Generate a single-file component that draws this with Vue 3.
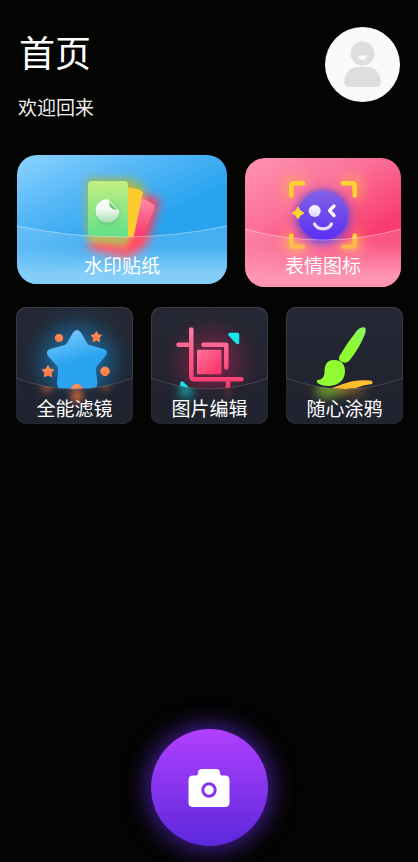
<script setup>
const wide = [
  { id: 'sticker', label: '水印贴纸', w: 210, h: 129 },
  { id: 'emoji', label: '表情图标', w: 156, h: 129 },
]
const small = [
  { id: 'filter', label: '全能滤镜', w: 117, h: 117 },
  { id: 'crop', label: '图片编辑', w: 117, h: 117 },
  { id: 'doodle', label: '随心涂鸦', w: 117, h: 117 },
]
const rows = [
  { name: 'wide', cards: wide },
  { name: 'small', cards: small },
]

const edge = (c) => `M0 71Q${c.w / 2} 93 ${c.w} 71`
const above = (c) => `${edge(c)}V0H0Z`
const below = (c) => `${edge(c)}V${c.h}H0Z`
</script>

<template>
  <main class="home">
    <header class="top">
      <div class="greeting">
        <h1>首页</h1>
        <p>欢迎回来</p>
      </div>
      <button class="avatar" type="button" aria-label="个人中心">
        <svg viewBox="0 0 75 75" aria-hidden="true">
          <circle cx="37.500" cy="26.500" r="12" fill="#dedede" />
          <path d="M33 28.500H42Q41.500 33 37.500 33T33 28.500Z" fill="#fafafa" />
          <path d="M31 40H44Q52 41 55 50Q58 60 50 60H25Q17 60 20 50Q23 41 31 40Z" fill="#dedede" />
        </svg>
      </button>
    </header>

    <nav class="tools" aria-label="工具">
      <div v-for="row in rows" :key="row.name" class="row" :class="row.name">
        <button v-for="c in row.cards" :key="c.id" type="button" class="card" :class="c.id">
          <svg class="art" :viewBox="`0 0 ${c.w} ${c.h}`" preserveAspectRatio="xMidYMid slice" aria-hidden="true">
            <defs>
              <clipPath :id="c.id + '-above'"><path :d="above(c)" /></clipPath>
              <clipPath :id="c.id + '-below'"><path :d="below(c)" /></clipPath>
              <filter :id="c.id + '-soft'" x="-60%" y="-60%" width="220%" height="220%"><feGaussianBlur stdDeviation="3" /></filter>
              <filter :id="c.id + '-glow'" x="-60%" y="-60%" width="220%" height="220%"><feGaussianBlur stdDeviation="5" /></filter>
              <filter :id="c.id + '-wide'" x="-80%" y="-80%" width="260%" height="260%"><feGaussianBlur stdDeviation="12" /></filter>
              <linearGradient id="green" x1="0" y1="0" x2="0" y2="1"><stop stop-color="#c2ee82" /><stop offset="1" stop-color="#58df8b" /></linearGradient>
              <linearGradient id="peel" x1="0" y1="0" x2="0" y2="1"><stop stop-color="#fff" /><stop offset=".4" stop-color="#f4fbf3" /><stop offset="1" stop-color="#a5dfb3" /></linearGradient>
              <linearGradient id="rose" x1="0" y1="0" x2="0" y2="1"><stop stop-color="#ff86a8" /><stop offset=".7" stop-color="#f93a70" /></linearGradient>
              <linearGradient id="square" x1="0" y1="0" x2="1" y2="1"><stop stop-color="#ff749b" /><stop offset=".8" stop-color="#fa3b70" /></linearGradient>
              <linearGradient id="violet" x1="0" y1="0" x2="0" y2="1"><stop stop-color="#8362e6" /><stop offset="1" stop-color="#5a2ff4" /></linearGradient>
              <linearGradient id="smile" x1="0" y1="0" x2="0" y2="1"><stop stop-color="#fff" /><stop offset="1" stop-color="#dcd2ff" /></linearGradient>
              <linearGradient id="sky" x1=".3" y1="0" x2=".6" y2="1"><stop stop-color="#7bc9ff" /><stop offset=".55" stop-color="#2aa3f0" /></linearGradient>
              <linearGradient id="orange" x1="0" y1="0" x2="0" y2="1"><stop stop-color="#ff9862" /><stop offset="1" stop-color="#ff7037" /></linearGradient>
              <linearGradient id="tool" gradientUnits="userSpaceOnUse" x1="0" y1="20" x2="0" y2="78"><stop stop-color="#ff7da3" /><stop offset="1" stop-color="#fa3b70" /></linearGradient>
              <linearGradient id="lime" x1="1" y1="0" x2="0" y2="1"><stop stop-color="#8bf56b" /><stop offset=".5" stop-color="#8cfb33" /></linearGradient>

              <g :id="c.id + '-icon'">
                <template v-if="c.id === 'sticker'">
                  <path d="M126 45L135.500 50.500Q137 52 136 54L118 95L100 88Z" fill="url(#rose)" stroke="url(#rose)" stroke-width="3" stroke-linejoin="round" />
                  <path d="M108 33L122 36Q125 37 124 40L112 97L90 92Z" fill="#fccb2d" stroke="#fccb2d" stroke-width="3" stroke-linejoin="round" />
                  <rect x="71" y="26" width="40" height="61" rx="4" fill="url(#green)" />
                </template>
                <template v-else-if="c.id === 'emoji'">
                  <circle cx="78" cy="57.300" r="25" fill="url(#violet)" />
                  <path d="M46.300 37.500V28Q46.300 25.300 49 25.300H58M98 25.300H107Q109.700 25.300 109.700 28V37.500M109.700 77.500V86Q109.700 88.700 107 88.700H98M58 88.700H49Q46.300 88.700 46.300 86V77.500" fill="none" stroke="#ffd42e" stroke-width="4.500" stroke-linecap="round" stroke-linejoin="round" />
                  <path d="M53 49Q54.500 53.500 59 55Q54.500 56.500 53 61Q51.500 56.500 47 55Q51.500 53.500 53 49Z" fill="#ffd42e" stroke="#ffd42e" stroke-width="1" stroke-linejoin="round" />
                  <circle cx="69.700" cy="53" r="6" fill="url(#smile)" />
                  <path d="M89 48L84.500 52.700L89 57.500" fill="none" stroke="#fff" stroke-width="3.300" stroke-linecap="round" stroke-linejoin="round" />
                  <path d="M69.500 66Q72 70.800 78 70.800T86.500 66" fill="none" stroke="#e5dcff" stroke-width="3.300" stroke-linecap="round" />
                </template>
                <template v-else-if="c.id === 'filter'">
                  <path d="M57 25.500Q61 20.500 65 25.500L71 36Q72 38 75 38.500L88 42Q93 44 90 48.500L81 59Q79.500 61 80 64L81.500 76Q81 82 76 81.500H46Q41 82 41 76L42 64Q42.500 61 41 59L32 49Q29 44 34 42L47 38.500Q50 38 51 36Z" fill="url(#sky)" />
                  <g fill="url(#orange)" stroke="#ff8650" stroke-width="1" stroke-linejoin="round">
                    <circle cx="43" cy="31" r="3.700" />
                    <circle cx="89" cy="64.300" r="4.300" />
                    <circle cx="60.700" cy="82.700" r="5.500" />
                    <path d="M80.300 24.500L82 27.700L85.500 28.300L83 31L83.600 34.700L80.300 33L77 34.700L77.600 31L75 28.300L78.600 27.700Z" />
                    <path d="M32 58.500L33.900 62L37.800 62.700L35.100 65.700L35.700 69.700L32 68L28.300 69.700L28.900 65.700L26.200 62.700L30.100 62Z" />
                  </g>
                </template>
                <template v-else-if="c.id === 'crop'">
                  <path d="M40.300 22.500V69Q40.300 72.300 43.500 72.300H90.500M27.500 37.700H37.500M52.500 37.700H75.300V60.500M77 74V89" fill="none" stroke="url(#tool)" stroke-width="4.500" stroke-linecap="round" stroke-linejoin="round" />
                  <rect x="46" y="42.700" width="24.500" height="24.500" rx="1" fill="url(#square)" />
                  <path d="M79 27.500H86.500V35.500Z" fill="#13e6ed" stroke="#13e6ed" stroke-width="3.500" stroke-linejoin="round" />
                  <path d="M31 76V84H39Z" fill="#13e6ed" stroke="#13e6ed" stroke-width="3.500" stroke-linejoin="round" />
                </template>
                <template v-else>
                  <path d="M46 81Q56 77 65 74.500Q76 72.500 85 73.500Q87.500 75 86 77Q77 78 70 81Q64 84 58 87Q49 85 46 81Z" fill="#ffbd2d" />
                  <path d="M53.500 49Q61 36 71 23.500Q75 19 79 20.500Q80.500 23 79 27Q73 42 63 54Q60 57 56 55Q51.500 53 53.500 49Z" fill="url(#lime)" />
                  <path d="M31.500 73Q38 72.500 38.500 66Q38 53 48 53Q59 53 59 65Q58 77 44 79Q36 79.500 31.500 76Q30 74 31.500 73Z" fill="#91fc34" />
                </template>
              </g>
            </defs>

            <g v-if="c.id === 'sticker'" filter="url(#sticker-glow)">
              <path d="M112 33L143 45L130 90L111 106L69 94Z" fill="#ff3d5c" />
              <path d="M70 24H113L128 31L112 80H70Z" fill="#a6b84a" />
            </g>
            <g v-else-if="c.id === 'emoji'" filter="url(#emoji-glow)">
              <path d="M42 42V22H62M94 22H114V42M114 73V92H94M62 92H42V73" fill="none" stroke="#ffbf3f" stroke-width="7" opacity=".5" />
              <circle cx="78" cy="59" r="27" fill="#6546d8" />
            </g>
            <circle v-else-if="c.id === 'filter'" cx="61" cy="55" r="36" fill="#187dbb" opacity=".75" filter="url(#filter-wide)" />
            <circle v-else-if="c.id === 'crop'" cx="60" cy="56" r="30" fill="#a82352" opacity=".6" filter="url(#crop-wide)" />

            <g :clip-path="`url(#${c.id}-above)`"><use :href="`#${c.id}-icon`" /></g>
            <path :d="below(c)" class="glass-base" />
            <g :clip-path="`url(#${c.id}-below)`">
              <g v-if="c.id === 'sticker'" filter="url(#sticker-soft)" opacity=".85">
                <path d="M112 78H132L120 94L109 102L74 88Z" fill="#ff4a5e" />
                <path d="M71 76H116L108 91L71 87Z" fill="#a9c35c" />
              </g>
              <use v-else :href="`#${c.id}-icon`" :filter="`url(#${c.id}-soft)`" class="reflection" />
              <use v-if="c.id === 'emoji'" href="#emoji-icon" opacity=".6" />
              <g v-if="c.id === 'filter'" filter="url(#filter-soft)" fill="#ff7840">
                <circle cx="61" cy="90" r="6" opacity=".7" />
                <circle cx="31" cy="80" r="6" opacity=".45" />
                <circle cx="89" cy="79" r="5" opacity=".4" />
              </g>
              <circle v-else-if="c.id === 'crop'" cx="35" cy="85" r="8" fill="#13c9cf" opacity=".5" filter="url(#crop-glow)" />
              <g v-else-if="c.id === 'doodle'" filter="url(#doodle-glow)">
                <ellipse cx="42" cy="83" rx="13" ry="9" fill="#8fcf2d" opacity=".6" />
                <ellipse cx="66" cy="84" rx="15" ry="6" fill="#b98c2a" opacity=".35" />
              </g>
            </g>
            <g v-if="c.id === 'sticker'">
              <circle cx="91" cy="59" r="10" fill="#35975d" opacity=".45" filter="url(#sticker-soft)" />
              <path d="M91 44.200A11.800 11.800 0 1 0 102.200 55.500Z" fill="url(#peel)" />
              <path d="M92 46.500L100.500 55Q91.500 55 92 46.500Z" fill="#6ccb6c" />
            </g>
            <path :d="edge(c)" class="rim" />
          </svg>
          <span class="shade"></span>
          <span class="label">{{ c.label }}</span>
        </button>
      </div>
    </nav>

    <button class="shutter" type="button" aria-label="拍照">
      <svg viewBox="0 0 42 38" aria-hidden="true">
        <path d="M5 6.500H8Q10 6.500 10 4Q10 0 14 0H28Q32 0 32 4Q32 6.500 34 6.500H37Q41.500 6.500 41.500 11V33.500Q41.500 38 37 38H5Q.5 38 .5 33.500V11Q.5 6.500 5 6.500Z" fill="#fff" />
        <circle cx="21" cy="21" r="6.200" fill="#fff" stroke="#8435ed" stroke-width="3" />
      </svg>
    </button>
  </main>
</template>

<style>
body {
  margin: 0;
  background: #040402;
}
</style>

<style scoped>
.home {
  box-sizing: border-box;
  min-height: 100vh;
  padding: 27px 0 16px;
  display: flex;
  flex-direction: column;
  background: #040402;
  color: #fff;
  font-family: "Noto Sans CJK SC", sans-serif;
}
button {
  margin: 0;
  padding: 0;
  border: 0;
  color: inherit;
  font: inherit;
  cursor: pointer;
}
.top {
  display: flex;
  justify-content: space-between;
  align-items: flex-start;
  padding: 0 18px;
}
h1 {
  margin: 0;
  padding-left: 1px;
  font-size: 36px;
  line-height: 48px;
  font-weight: 400;
}
p {
  margin: 20px 0 0;
  font-size: 18px;
  line-height: 24px;
  color: #eee;
}
.avatar {
  width: 75px;
  height: 75px;
  border-radius: 50%;
  background: #fafafa;
}
.avatar svg {
  display: block;
}
.tools {
  display: flex;
  flex-direction: column;
  gap: 20px;
  margin-top: 36px;
}
.row {
  display: grid;
  gap: 18px;
}
.wide {
  grid-template-columns: 210fr 156fr;
  padding: 0 17px;
}
.small {
  grid-template-columns: repeat(3, 1fr);
  padding: 0 15px 0 16px;
}
.card {
  display: grid;
  align-items: end;
  overflow: hidden;
  height: 129px;
  border-radius: 20px;
}
.card > * {
  grid-area: 1 / 1;
}
.small .card {
  height: 117px;
  border-radius: 10px;
  background: linear-gradient(#262935, #1f222d);
  box-shadow: inset 0 0 0 1px #393b45;
}
.art {
  display: block;
  width: 100%;
  height: 100%;
  min-width: 0;
}
.sticker {
  background: linear-gradient(155deg, #8cd3ff 0%, #57b8f7 28%, #27a3ef 58%, #27a3ef 100%);
}
.emoji {
  margin-top: 3px;
  background: linear-gradient(150deg, #ff94b4 0%, #fb7098 35%, #f83b70 68%);
}
.glass-base {
  fill: rgba(255, 255, 255, 0.14);
}
.small .glass-base {
  fill: #222530;
  fill-opacity: 0.85;
}
.reflection {
  opacity: 0.7;
}
.small .reflection {
  opacity: 0.3;
}
.rim {
  fill: none;
  stroke: rgba(255, 255, 255, 0.4);
  stroke-width: 1;
}
.small .rim {
  stroke: rgba(255, 255, 255, 0.16);
}
.shade {
  height: 45px;
}
.sticker .shade {
  height: 38px;
  background: linear-gradient(rgba(139, 209, 250, 0), rgba(139, 209, 250, 0.9) 75%);
}
.emoji .shade {
  background: linear-gradient(rgba(255, 155, 184, 0), rgba(255, 155, 184, 0.9) 75%);
}
.label {
  padding-bottom: 7px;
  font-size: 18px;
  line-height: 24px;
  text-align: center;
}
.emoji .label {
  padding-bottom: 10px;
}
.small .label {
  padding-bottom: 4px;
}
.label {
  font-size: 19px;
}
p {
  font-size: 19px;
}
.shutter {
  display: grid;
  place-items: center;
  width: 117px;
  height: 117px;
  margin: auto auto 0;
  border-radius: 50%;
  background: linear-gradient(#b140ff, #5c28dc);
  box-shadow: 0 0 24px 3px rgba(100, 45, 230, 0.7);
}
.shutter svg {
  width: 42px;
  height: 38px;
}
</style>
